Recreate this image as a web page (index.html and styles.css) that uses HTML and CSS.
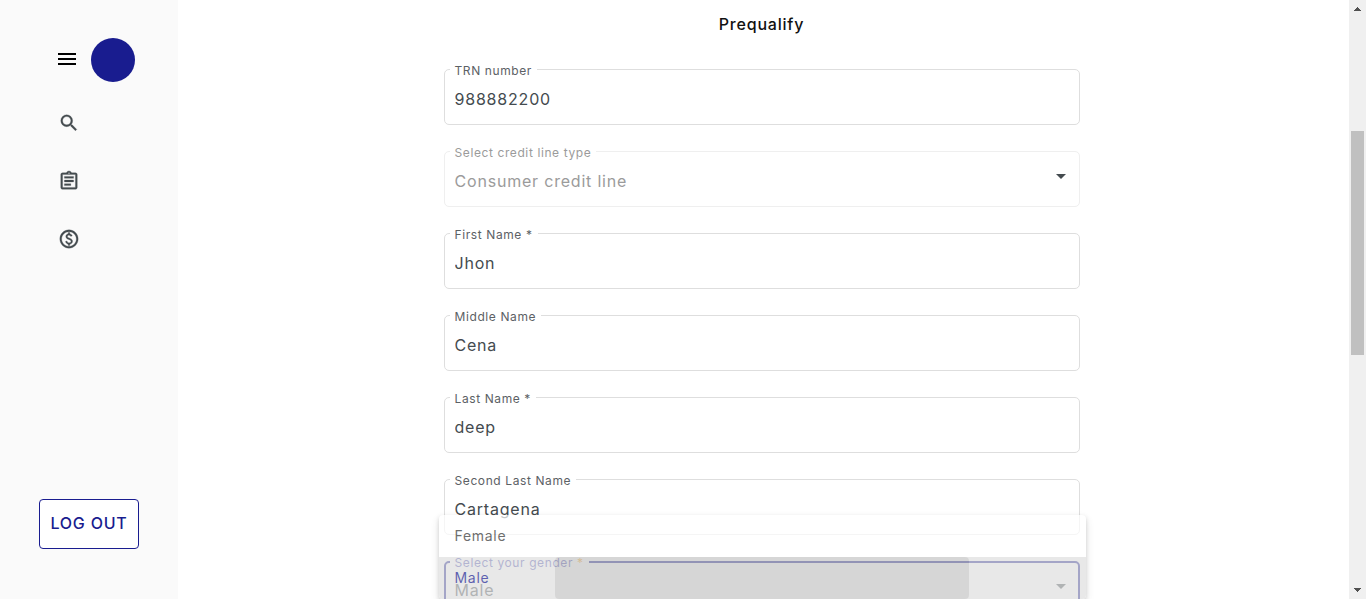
FILE: index.html
```html
<!DOCTYPE html>
<html lang="en">
<head>
<meta charset="utf-8">
<meta name="viewport" content="width=device-width, initial-scale=1">
<title>Prequalify</title>
<link rel="stylesheet" href="styles.css">
</head>
<body>
<div class="app">
  <aside class="sidebar">
    <div class="brand">
      <button class="icon-button menu" type="button" aria-label="Menu">
        <svg width="24" height="24" viewBox="0 0 24 24"><path d="M3 18h18v-2H3v2zm0-5h18v-2H3v2zm0-7v2h18V6H3z"/></svg>
      </button>
      <div class="avatar"></div>
    </div>
    <nav class="nav">
      <a href="#search" aria-label="Search"><svg width="22" height="22" viewBox="0 0 24 24"><path d="M15.5 14h-.79l-.28-.27A6.471 6.471 0 0 0 16 9.500 6.500 6.500 0 1 0 9.500 16c1.610 0 3.090-.59 4.230-1.570l.27.28v.79l5 4.990L20.490 19l-4.990-5zm-6 0C7.010 14 5 11.990 5 9.500S7.010 5 9.500 5 14 7.010 14 9.500 11.990 14 9.500 14z"/></svg></a>
      <a href="#requests" aria-label="Requests"><svg width="22" height="22" viewBox="0 0 24 24"><path d="M7 15h7v2H7zm0-4h10v2H7zm0-4h10v2H7zm12-4h-4.180C14.400 1.840 13.300 1 12 1s-2.400.84-2.820 2H5c-1.100 0-2 .9-2 2v14c0 1.100.9 2 2 2h14c1.100 0 2-.9 2-2V5c0-1.100-.9-2-2-2zm-7-.25c.41 0 .75.34.75.75s-.34.75-.75.75-.75-.34-.75-.75.34-.75.75-.75zM19 19H5V5h14v14z"/></svg></a>
      <a href="#payments" aria-label="Payments"><svg width="22" height="22" viewBox="0 0 24 24"><path d="M12 2C6.480 2 2 6.480 2 12s4.480 10 10 10 10-4.480 10-10S17.520 2 12 2zm0 18c-4.410 0-8-3.590-8-8s3.590-8 8-8 8 3.590 8 8-3.590 8-8 8zm.89-8.900c-1.780-.59-2.640-.96-2.640-1.900 0-1.020 1.110-1.390 1.810-1.390 1.310 0 1.790.99 1.900 1.340l1.580-.67c-.15-.44-.82-1.910-2.660-2.230V5h-1.750v1.260c-2.600.56-2.620 2.850-2.620 2.960 0 2.270 2.250 2.910 3.350 3.310 1.580.56 2.280 1.070 2.280 2.030 0 1.130-1.050 1.610-1.980 1.610-1.820 0-2.340-1.870-2.400-2.090l-1.660.67c.63 2.190 2.280 2.780 3.020 2.960V19h1.750v-1.240c.52-.09 3.020-.59 3.020-3.220.01-1.390-.6-2.610-3-3.440z"/></svg></a>
    </nav>
    <button class="logout" type="button">LOG OUT</button>
  </aside>

  <main class="content">
    <form class="form">
      <h1 class="title">Prequalify</h1>
      <div class="field">
        <label class="label" for="trn">TRN number</label>
        <input class="control" id="trn" type="text" value="988882200">
      </div>
      <div class="field disabled">
        <label class="label" for="credit">Select credit line type</label>
        <select class="control" id="credit" disabled><option>Consumer credit line</option></select>
        <svg class="arrow" width="10" height="5" viewBox="0 0 10 5"><path d="M0 0h10L5 5z"/></svg>
      </div>
      <div class="field">
        <label class="label" for="first">First Name *</label>
        <input class="control" id="first" type="text" value="Jhon">
      </div>
      <div class="field">
        <label class="label" for="middle">Middle Name</label>
        <input class="control" id="middle" type="text" value="Cena">
      </div>
      <div class="field">
        <label class="label" for="last">Last Name *</label>
        <input class="control" id="last" type="text" value="deep">
      </div>
      <div class="field">
        <label class="label" for="second">Second Last Name</label>
        <input class="control" id="second" type="text" value="Cartagena">
      </div>
      <div class="field focused">
        <label class="label" for="gender">Select your gender <span class="required">*</span></label>
        <select class="control" id="gender"><option>Male</option><option>Female</option></select>
        <svg class="arrow" width="10" height="5" viewBox="0 0 10 5"><path d="M0 0h10L5 5z"/></svg>
        <div class="panel" role="listbox" aria-label="Gender">
          <div class="option" role="option" aria-selected="false">Female</div>
          <div class="option selected" role="option" aria-selected="true"><span class="ripple"></span><span class="option-text">Male</span></div>
        </div>
      </div>
    </form>
  </main>

  <div class="scrollbar" aria-hidden="true">
    <svg width="7" height="4" viewBox="0 0 7 4"><path d="M3 0h1v1h1v1h1v1h1v1H0V3h1V2h1V1h1z"/></svg>
    <div class="track"><div class="thumb"></div></div>
    <svg width="7" height="4" viewBox="0 0 7 4"><path d="M0 0h7v1H6v1H5v1H4v1H3V3H2V2H1V1H0z"/></svg>
  </div>
</div>
</body>
</html>
```

FILE: styles.css
```css
* {
  box-sizing: border-box;
  letter-spacing: 0.05em;
}

body {
  margin: 0;
  font-family: Inter, "Liberation Sans", sans-serif;
  font-size: 16px;
  line-height: 24px;
  color: #444b4f;
  background: #fff;
}

button,
input,
select {
  font: inherit;
}

.app {
  display: flex;
  height: 100vh;
  overflow: hidden;
}

.sidebar {
  display: flex;
  flex-direction: column;
  flex: none;
  width: 178px;
  padding: 38px 39px 50px;
  background: #fafafa;
}

.brand {
  display: flex;
  align-items: center;
  gap: 12px;
  padding-left: 16px;
}

.icon-button {
  display: flex;
  padding: 0 0 2px;
  border: 0;
  background: none;
}

.avatar {
  flex: none;
  width: 44px;
  height: 44px;
  border-radius: 50%;
  background: #191c8f;
}

.nav {
  display: flex;
  flex-direction: column;
  align-items: flex-start;
  gap: 36px;
  padding: 30px 19px;
}

.nav a {
  display: flex;
}

.nav svg {
  fill: #444b4f;
  stroke: #444b4f;
  stroke-width: 0.3;
}

.logout {
  height: 50px;
  margin-top: auto;
  padding: 0 0 2px;
  border: 1px solid #191c8f;
  border-radius: 4px;
  background: #fff;
  color: #191c8f;
  font-weight: 500;
}

.content {
  flex: 1;
  padding: 12px 4px 0 0;
}

.form {
  display: flex;
  flex-direction: column;
  gap: 26px;
  max-width: 636px;
  margin: 0 auto;
}

.title {
  margin: 0 0 7px;
  font-size: 16px;
  font-weight: 500;
  text-align: center;
  color: #111;
}

.field {
  position: relative;
  flex: none;
}

.label {
  position: absolute;
  top: -6px;
  left: 6px;
  padding: 0 5px;
  background: #fff;
  color: #5c6165;
  font-size: 12px;
  line-height: 16px;
}

.control {
  display: block;
  width: 100%;
  height: 56px;
  padding: 3px 10px 0;
  border: 1px solid #dedede;
  border-radius: 5px;
  outline: 0;
  background: #fff;
  color: #444b4f;
  appearance: none;
}

.arrow {
  position: absolute;
  top: 23px;
  right: 14px;
  fill: #444b4f;
}

.disabled .control {
  border-color: #efefef;
  color: #9b9b9b;
  opacity: 1;
}

.disabled .label {
  color: #9b9b9b;
}

.focused .control {
  padding: 2px 9px 0;
  border: 2px solid #191c8f;
}

.focused .label {
  color: #4d4fb0;
}

.required {
  color: #f5a623;
}

.panel {
  position: absolute;
  top: -46px;
  left: -5px;
  right: -6px;
  overflow: hidden;
  border-radius: 4px;
  background: #fff;
  box-shadow: 0 2px 4px rgba(0, 0, 0, 0.2), 0 4px 8px rgba(0, 0, 0, 0.14);
  opacity: 0.7;
}

.option {
  position: relative;
  padding: 9px 16px;
  font-size: 14px;
  color: #333;
}

.selected {
  background: #dfdfdf;
  color: #191c8f;
}

.ripple {
  position: absolute;
  inset: 0 18%;
  border-radius: 4px;
  background: rgba(0, 0, 0, 0.11);
}

.option-text {
  position: relative;
}

.scrollbar {
  display: flex;
  flex-direction: column;
  align-items: center;
  flex: none;
  width: 17px;
  padding: 7px 0;
  background: #f0f0f0;
}

.scrollbar svg {
  flex: none;
  fill: #505050;
}

.track {
  display: flex;
  flex-direction: column;
  flex: 1;
  width: 13px;
  padding-top: 120px;
}

.thumb {
  height: 49%;
  background: #c0c0c0;
}
```
